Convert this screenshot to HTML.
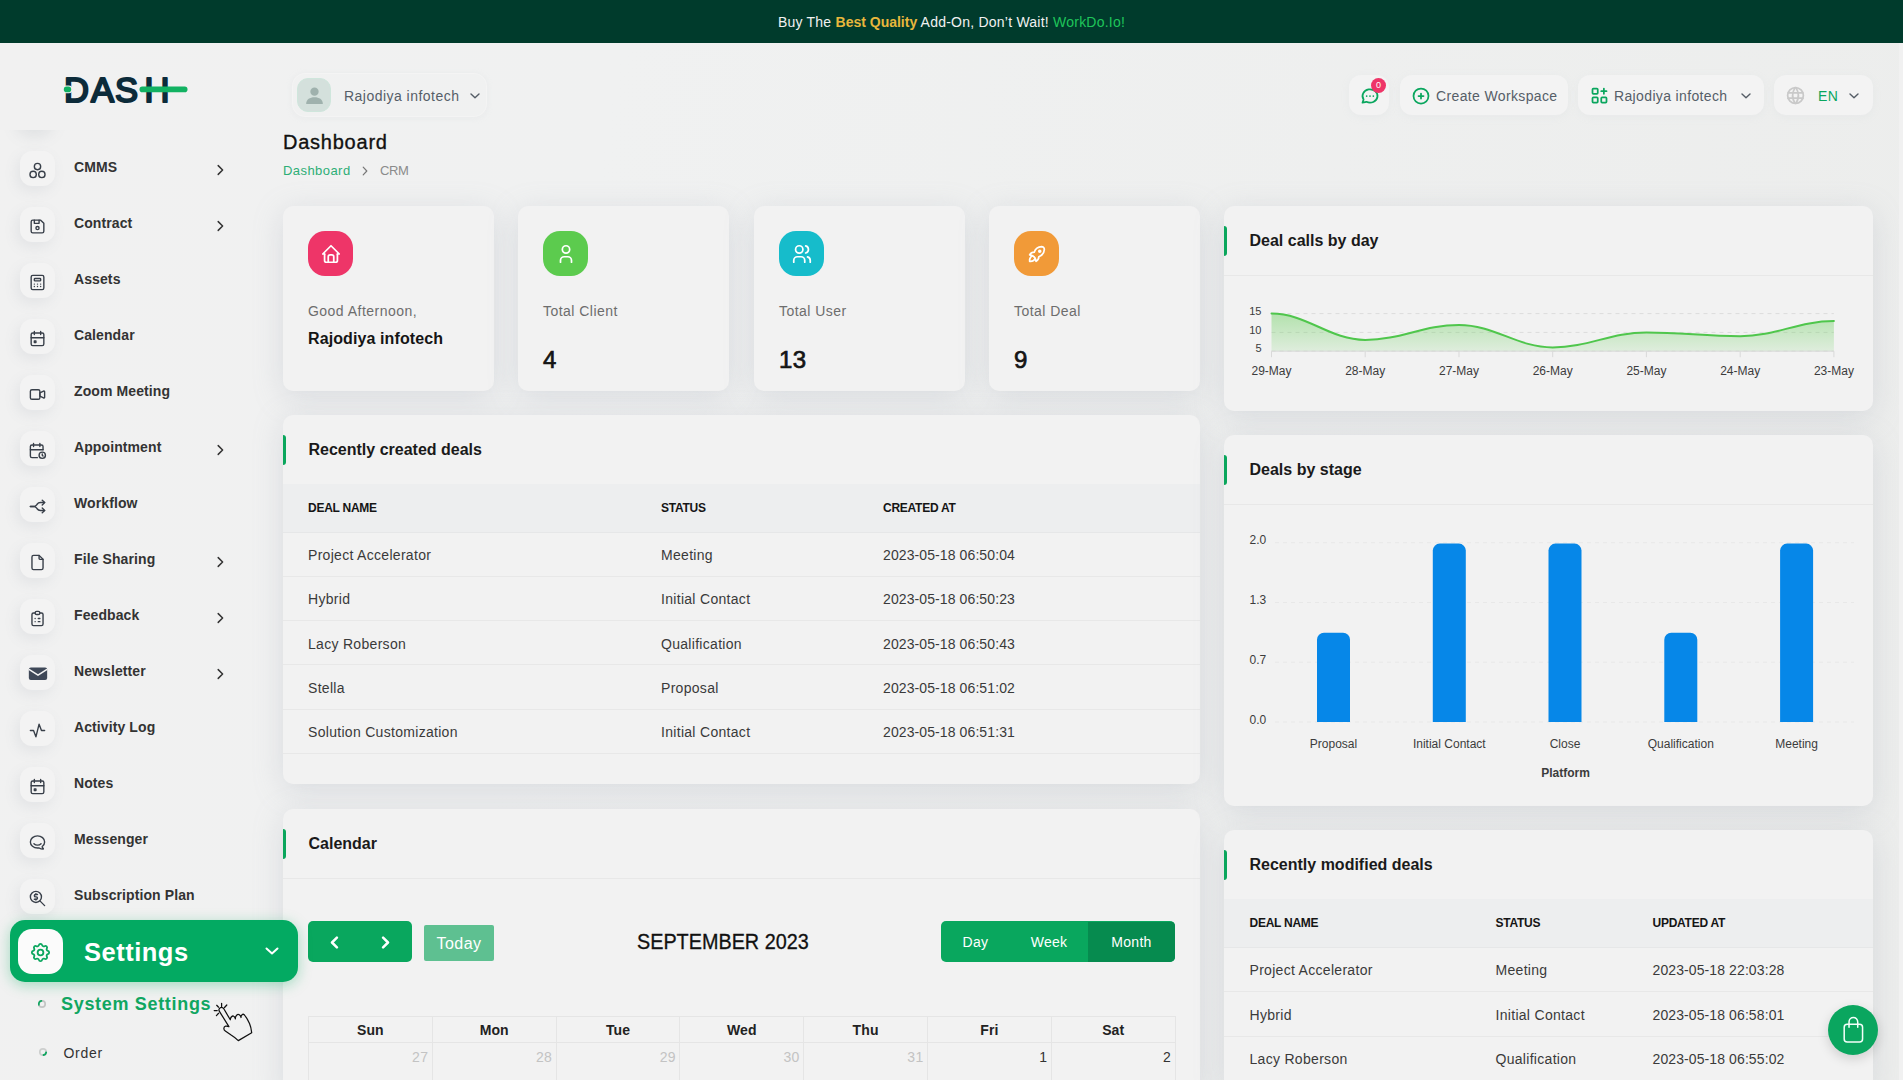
<!DOCTYPE html>
<html lang="en">
<head>
<meta charset="utf-8">
<title>Dashboard</title>
<style>
*{box-sizing:border-box;margin:0;padding:0}
html,body{width:1903px;height:1080px;overflow:hidden}
body{font-family:"Liberation Sans",sans-serif;font-size:14px;color:#333;background:linear-gradient(100deg,#f1f1f1 0,#f0f1f1 30%,#ecedec 100%);position:relative;letter-spacing:.3px}
svg{display:block}
/* banner */
#banner{position:absolute;left:0;top:0;width:1903px;height:42.500px;background:#003b2c;color:#f1f1f1;text-align:center;line-height:44px;font-size:14px;letter-spacing:.23px;white-space:nowrap}
#banner .y{color:#e8b73c;font-weight:700;letter-spacing:0}
#banner .g{color:#1fc55a}
#side,#main{position:absolute;left:0;top:0;width:0;height:0}
#side{z-index:5}
/* sidebar */
#logo{position:absolute;left:63px;top:75px}
.nav{position:absolute;left:0;width:280px;height:36px}
.nav .ic{position:absolute;left:20px;top:0;width:35px;height:35px;border-radius:12px;background:#f3f3f3;box-shadow:-3px 5px 14px rgba(110,120,135,.10)}
.nav .ic svg{position:absolute;left:8.200px;top:9.500px;width:19px;height:19px;stroke:#383f49;fill:none;stroke-width:1.75;stroke-linecap:round;stroke-linejoin:round}
.nav .ic svg.mail{left:6.500px;top:7.700px;width:22px;height:22px}
.nav .tx{position:absolute;left:74px;top:8px;font-weight:700;font-size:14px;letter-spacing:.1px;color:#333;line-height:17px;white-space:nowrap}
.nav .ch{position:absolute;left:215.500px;top:13px;width:9px;height:12px;stroke:#333;fill:none;stroke-width:1.500;stroke-linecap:round;stroke-linejoin:round}
.ghost{position:absolute;left:20px;top:-35px;width:35px;height:35px;border-radius:12px;box-shadow:-3px 5px 16px rgba(110,120,135,.15)}
#setbtn{position:absolute;left:10px;top:920px;width:287.500px;height:62px;border-radius:15px;background:#03aa62;box-shadow:0 3px 14px rgba(12,175,96,.35)}
#setbtn .wic{position:absolute;left:8px;top:9px;width:45px;height:45px;border-radius:14px;background:#fbfbfb}
#setbtn .wic svg{position:absolute;left:10.500px;top:11.500px;width:23px;height:23px;stroke:#0aa65e;fill:none;stroke-width:1.900;stroke-linecap:round;stroke-linejoin:round}
#setbtn .st{position:absolute;left:74px;top:16.500px;font-size:25.500px;line-height:30px;font-weight:700;color:#fff;letter-spacing:.5px}
#setbtn .dn{position:absolute;left:255px;top:27px;width:14px;height:8px;stroke:#fff;fill:none;stroke-width:2;stroke-linecap:round;stroke-linejoin:round}
.sub{position:absolute;white-space:nowrap}
.sub svg{position:absolute;width:10px;height:10px;fill:none;stroke-width:1.700;stroke-linecap:round}
.s1 svg{left:-24.100px;top:6.700px}
.s2 svg{left:-25.800px;top:2px}
.s1{left:61px;top:992px}
.s1 span{font-size:18px;line-height:24px;font-weight:700;color:#10a661;letter-spacing:.68px}
.s2{left:63.500px;top:1045px}
.s2 span{font-size:14px;line-height:17px;color:#333;letter-spacing:.7px}
#hand{position:absolute;left:200px;top:990px;stroke:#111;fill:none;stroke-width:1.250;stroke-linecap:round;stroke-linejoin:round}
/* header */
#userpill{position:absolute;left:292px;top:73px;width:195px;height:44px;border-radius:13px;border:1px solid #f4f4f4;box-shadow:0 1px 6px rgba(200,204,210,.18)}
#userpill .av{position:absolute;left:4px;top:4px;width:34px;height:34px;border-radius:11px;background:#d4e0dc;border:1px solid #cfe6dc}
#userpill .av svg{position:absolute;left:2.500px;top:3px;width:27px;height:27px;fill:#9fb1ad;stroke:none}
#userpill .nm{position:absolute;left:51px;top:14px;line-height:17px;font-size:14px;color:#565e68;letter-spacing:.47px;white-space:nowrap}
.dn{position:absolute;top:19px;width:10px;height:6px;stroke:#555d66;fill:none;stroke-width:1.400;stroke-linecap:round;stroke-linejoin:round}
#userpill .dn{left:177px;top:19px}
.pill{position:absolute;top:75px;height:40px;border-radius:12px;background:#f3f3f3;box-shadow:0 2px 8px rgba(190,195,202,.10)}
.pill .gi{position:absolute;stroke:#0aa65e;fill:none;stroke-width:2;stroke-linecap:round;stroke-linejoin:round}
.pill .gi.gry{stroke:#c9c9c9}
.pill .pt{position:absolute;top:13px;line-height:17px;font-size:14px;color:#565e68;letter-spacing:.36px;white-space:nowrap}
.pill .pt.grn{color:#0aa65e}
.pill .dn{top:18px}
.bdg{position:absolute;left:22px;top:3px;width:15px;height:15px;border-radius:50%;background:#ee3568;color:#fff;font-size:9px;line-height:15px;text-align:center;letter-spacing:0}
#ptitle{position:absolute;left:283px;top:129px;font-size:20px;line-height:26px;font-weight:400;color:#111;letter-spacing:.76px;-webkit-text-stroke:.35px #111;white-space:nowrap}
#crumb{position:absolute;left:283px;top:162px;font-size:13px;line-height:17px;white-space:nowrap;letter-spacing:.25px}
#crumb .c1{position:absolute;left:0;color:#2dae76;letter-spacing:.44px}
#crumb .c2{position:absolute;left:97px;color:#8b8b8b;letter-spacing:-.4px}
#crumb svg{position:absolute;left:79px;top:4px;width:6px;height:10px;stroke:#777;fill:none;stroke-width:1.200;stroke-linecap:round;stroke-linejoin:round}
/* cards */
.card{position:absolute;background:#f2f2f2;border-radius:10px;box-shadow:0 6px 30px rgba(150,160,175,.26);overflow:hidden}
.card .hd{position:absolute;left:0;top:0;right:0;height:69.500px;border-bottom:1px solid #e8e8e8}
.card .hd .bar{position:absolute;left:0;top:20px;width:3px;height:30px;background:#0aa65c;border-radius:0 3px 3px 0}
.card .hd h5{position:absolute;left:25.500px;top:24.500px;font-size:16px;line-height:20px;font-weight:700;letter-spacing:0;color:#1a1a1a;white-space:nowrap}
.stat{top:206px;width:211px;height:184.500px}
.stat .sic{position:absolute;left:25px;top:25px;width:45px;height:45px;border-radius:17px}
.stat .sic svg{position:absolute;left:11.500px;top:11.500px;width:22px;height:22px;stroke:#fff;fill:none;stroke-width:1.900;stroke-linecap:round;stroke-linejoin:round}
.stat .l1{position:absolute;left:25px;top:97px;line-height:17px;font-size:14px;color:#6d6d6d;letter-spacing:.47px;white-space:nowrap}
.stat .nm{position:absolute;left:25px;top:123px;line-height:20px;font-size:16px;font-weight:700;color:#151515;letter-spacing:.1px;white-space:nowrap}
.stat .num{position:absolute;left:25px;top:139.500px;line-height:28px;font-size:24px;font-weight:400;color:#151515;letter-spacing:.3px;-webkit-text-stroke:.7px #151515}
/* tables */
.thead{position:absolute;left:0;right:0;background:#edeeef;border-bottom:1px solid #e6e7e8}
.thead span{position:absolute;top:50%;margin-top:-6.500px;line-height:15px;font-size:12px;font-weight:700;text-transform:uppercase;color:#151515;letter-spacing:-.25px;white-space:nowrap}
.tr{position:absolute;left:0;right:0;border-bottom:1px solid #e8e8e8}
.tr span{position:absolute;top:50%;margin-top:-7px;line-height:17px;font-size:14px;color:#3a3a3a;letter-spacing:.3px;white-space:nowrap}
.tr span:nth-child(3){letter-spacing:.1px}
/* charts */
.chart{position:absolute;left:0;top:0}
.chart text{font-family:"Liberation Sans",sans-serif;letter-spacing:0;fill:#3c3c3c}
.ax11{font-size:11px;dominant-baseline:middle}
.ax12{font-size:12px}
.ay12{font-size:12px;dominant-baseline:middle;fill:#3c3c3c}
.ax12b{font-size:12px;font-weight:700}
/* calendar */
.fcg{position:absolute;height:41px;border-radius:5px;background:#09a75e;overflow:hidden}
.fcg svg{position:absolute;top:14.500px;width:9px;height:13px;stroke:#fff;fill:none;stroke-width:2.300;stroke-linecap:round;stroke-linejoin:round}
.fcg span{position:absolute;top:1px;height:41px;line-height:41px;text-align:center;color:#fff;font-size:14px;letter-spacing:.3px}
.fcg span.act{background:#068b4f}
.today{position:absolute;left:141px;top:116px;width:70px;height:36px;background:#5ec091;color:#fff;font-size:16px;line-height:38px;text-align:center;border-radius:2px;letter-spacing:.45px}
.fct{position:absolute;left:354px;top:119px;font-size:21.500px;line-height:28px;color:#111;letter-spacing:0;transform:scaleX(.921);transform-origin:0 50%;-webkit-text-stroke:.3px #111;white-space:nowrap}
.grid{position:absolute;left:25px;top:206.500px;width:867.500px;height:100px;border-top:1px solid #e5e5e5}
.col{position:absolute;top:0;height:100px;border-left:1px solid #e5e5e5;border-right:1px solid #e5e5e5}
.col .dh{height:26px;line-height:26px;text-align:center;font-weight:700;font-size:14px;color:#222;letter-spacing:.1px;border-bottom:1px solid #e5e5e5}
.col .dn{position:static;width:auto;height:auto;text-align:right;padding-right:3.500px;line-height:29px;font-size:14px;color:#333;letter-spacing:.3px;stroke:none}
.col .dn.om{color:#c3c3c3}
/* fab */
#fab{position:absolute;left:1828px;top:1005px;width:50px;height:50px;border-radius:50%;background:#0aa65f;box-shadow:0 4px 12px rgba(0,0,0,.15)}
#fab svg{position:absolute;left:10.700px;top:10.300px;width:29px;height:29px;stroke:#f4fffa;fill:none;stroke-width:1.250;stroke-linecap:round;stroke-linejoin:round}
#sbar{position:absolute;left:1899px;top:42.500px;width:4px;height:1038px;background:#f1f1f1}

</style>
</head>
<body>
<div id="banner">Buy The <span class="y">Best Quality</span> Add-On, Don’t Wait! <span class="g">WorkDo.Io!</span></div>
<div id="side">
<svg id="logo" viewBox="0 0 126 30" width="126" height="30" role="img" aria-label="DASH">
<text x="1 28 52 81.5" y="27.2" font-family="Liberation Sans, sans-serif" font-weight="400" font-size="34.5" fill="#0c2b3a" stroke="#0c2b3a" stroke-width="2.1" stroke-linejoin="round" stroke-linecap="round">DASH</text>
<rect x="76.5" y="11.6" width="48" height="5.6" rx="2.8" fill="#12b262"/><rect x="-0.5" y="10.6" width="10" height="7.6" rx="3.8" fill="#f1f1f1"/><rect x="0.8" y="11.6" width="7.4" height="5.6" rx="2.8" fill="#12b262"/>
</svg>
<div style="position:absolute;left:0;top:130px;width:90px;height:30px;overflow:hidden"><span class="ic ghost"></span></div>
<div class="nav" style="top:151px"><span class="ic"><svg class="" style="" viewBox="0 0 24 24"><circle cx="12" cy="7" r="4"/><circle cx="6.5" cy="17" r="4"/><circle cx="17.5" cy="17" r="4"/></svg></span><span class="tx">CMMS</span><svg class="ch" viewBox="0 0 9 12"><path d="M2.2 1.6l4.4 4.4l-4.4 4.4"/></svg></div>
<div class="nav" style="top:207px"><span class="ic"><svg class="" style="" viewBox="0 0 24 24"><path d="M6 4h10l4 4v10a2 2 0 0 1 -2 2h-12a2 2 0 0 1 -2 -2v-12a2 2 0 0 1 2 -2"/><circle cx="12" cy="14" r="2"/><path d="M14 4v4h-6v-4"/></svg></span><span class="tx">Contract</span><svg class="ch" viewBox="0 0 9 12"><path d="M2.2 1.6l4.4 4.4l-4.4 4.4"/></svg></div>
<div class="nav" style="top:263px"><span class="ic"><svg class="" style="" viewBox="0 0 24 24"><rect x="4" y="3" width="16" height="18" rx="2"/><rect x="8" y="7" width="8" height="3" rx="1"/><path d="M8 14v.01M12 14v.01M16 14v.01M8 17v.01M12 17v.01M16 17v.01"/></svg></span><span class="tx">Assets</span></div>
<div class="nav" style="top:319px"><span class="ic"><svg class="" style="" viewBox="0 0 24 24"><rect x="4" y="5" width="16" height="16" rx="2"/><path d="M16 3v4M8 3v4M4 11h16"/><rect x="8" y="15" width="2" height="2"/></svg></span><span class="tx">Calendar</span></div>
<div class="nav" style="top:375px"><span class="ic"><svg class="" style="" viewBox="0 0 24 24"><path d="M15 10l4.553 -2.276a1 1 0 0 1 1.447 .894v6.764a1 1 0 0 1 -1.447 .894l-4.553 -2.276v-4z"/><rect x="3" y="6" width="12" height="12" rx="2"/></svg></span><span class="tx">Zoom Meeting</span></div>
<div class="nav" style="top:431px"><span class="ic"><svg class="" style="" viewBox="0 0 24 24"><path d="M11.795 21h-6.795a2 2 0 0 1 -2 -2v-12a2 2 0 0 1 2 -2h12a2 2 0 0 1 2 2v4"/><circle cx="18" cy="18" r="4"/><path d="M15 3v4M7 3v4M3 11h16M18 16.496v1.504l1 1"/></svg></span><span class="tx">Appointment</span><svg class="ch" viewBox="0 0 9 12"><path d="M2.2 1.6l4.4 4.4l-4.4 4.4"/></svg></div>
<div class="nav" style="top:487px"><span class="ic"><svg class="" style="" viewBox="0 0 24 24"><path d="M21 17h-5.397a5 5 0 0 1 -4.096 -2.133l-.514 -.734a5 5 0 0 0 -4.096 -2.133h-3.897"/><path d="M21 7h-5.395a5 5 0 0 0 -4.098 2.135l-.51 .73a5 5 0 0 1 -4.097 2.135h-3.9"/><path d="M18 10l3 -3l-3 -3M18 20l3 -3l-3 -3"/></svg></span><span class="tx">Workflow</span></div>
<div class="nav" style="top:543px"><span class="ic"><svg class="" style="" viewBox="0 0 24 24"><path d="M14 3v4a1 1 0 0 0 1 1h4"/><path d="M17 21h-10a2 2 0 0 1 -2 -2v-14a2 2 0 0 1 2 -2h7l5 5v11a2 2 0 0 1 -2 2z"/></svg></span><span class="tx">File Sharing</span><svg class="ch" viewBox="0 0 9 12"><path d="M2.2 1.6l4.4 4.4l-4.4 4.4"/></svg></div>
<div class="nav" style="top:599px"><span class="ic"><svg class="" style="" viewBox="0 0 24 24"><path d="M9 5h-2a2 2 0 0 0 -2 2v12a2 2 0 0 0 2 2h10a2 2 0 0 0 2 -2v-12a2 2 0 0 0 -2 -2h-2"/><rect x="9" y="3" width="6" height="4" rx="2"/><path d="M9 12h.01M13 12h2M9 16h.01M13 16h2"/></svg></span><span class="tx">Feedback</span><svg class="ch" viewBox="0 0 9 12"><path d="M2.2 1.6l4.4 4.4l-4.4 4.4"/></svg></div>
<div class="nav" style="top:655px"><span class="ic"><svg viewBox="0 0 24 24" class="mail"><rect x="2" y="4.800" width="20" height="13.800" rx="2.200" fill="#3f4858" stroke="none"/><path d="M2.600 7.200l9.400 6.100l9.400 -6.100" stroke="#f3f3f3" stroke-width="1.7" fill="none"/></svg></span><span class="tx">Newsletter</span><svg class="ch" viewBox="0 0 9 12"><path d="M2.2 1.6l4.4 4.4l-4.4 4.4"/></svg></div>
<div class="nav" style="top:711px"><span class="ic"><svg class="" style="" viewBox="0 0 24 24"><path d="M3 12h4l3 8l4 -16l3 8h4"/></svg></span><span class="tx">Activity Log</span></div>
<div class="nav" style="top:767px"><span class="ic"><svg class="" style="" viewBox="0 0 24 24"><rect x="4" y="5" width="16" height="16" rx="2"/><path d="M16 3v4M8 3v4M4 11h16"/><rect x="8" y="15" width="2" height="2"/></svg></span><span class="tx">Notes</span></div>
<div class="nav" style="top:823px"><span class="ic"><svg class="" style="" viewBox="0 0 24 24"><path d="M17.802 17.292s.077 -.055 .2 -.149c1.843 -1.425 3 -3.49 3 -5.789c0 -4.286 -4.03 -7.764 -9 -7.764c-4.97 0 -9 3.478 -9 7.764c0 4.288 4.03 7.646 9 7.646c.424 0 1.12 -.028 2.088 -.084c1.262 .82 3.104 1.493 4.716 1.493c.499 0 .734 -.41 .414 -.828c-.486 -.596 -1.156 -1.551 -1.416 -2.29z"/><path d="M7.5 13.5c2.5 2.5 6.5 2.5 9 0"/></svg></span><span class="tx">Messenger</span></div>
<div class="nav" style="top:879px"><span class="ic"><svg class="" style="" viewBox="0 0 24 24"><circle cx="10" cy="10" r="7"/><path d="M21 21l-6 -6"/><path d="M12 7h-2.5a1.5 1.5 0 0 0 0 3h1a1.5 1.5 0 0 1 0 3h-2.5"/><path d="M10 13v1m0 -8v1"/></svg></span><span class="tx">Subscription Plan</span></div>
<div id="setbtn"><span class="wic"><svg class="" style="" viewBox="0 0 24 24"><path d="M10.325 4.317c.426 -1.756 2.924 -1.756 3.35 0a1.724 1.724 0 0 0 2.573 1.066c1.543 -.94 3.31 .826 2.37 2.37a1.724 1.724 0 0 0 1.065 2.572c1.756 .426 1.756 2.924 0 3.35a1.724 1.724 0 0 0 -1.066 2.573c.94 1.543 -.826 3.31 -2.37 2.37a1.724 1.724 0 0 0 -2.572 1.065c-.426 1.756 -2.924 1.756 -3.35 0a1.724 1.724 0 0 0 -2.573 -1.066c-1.543 .94 -3.31 -.826 -2.37 -2.37a1.724 1.724 0 0 0 -1.065 -2.572c-1.756 -.426 -1.756 -2.924 0 -3.35a1.724 1.724 0 0 0 1.066 -2.573c-.94 -1.543 .826 -3.31 2.37 -2.37c1 .608 2.296 .07 2.572 -1.065z"/><circle cx="12" cy="12" r="3"/></svg></span><span class="st">Settings</span><svg class="dn" viewBox="0 0 14 8"><path d="M1.5 1.5l5.5 5l5.5 -5"/></svg></div>
<div class="sub s1"><svg viewBox="0 0 10 10"><circle cx="5" cy="5" r="3.200" stroke="#c3c5c4"/><path d="M1.900 5.800A3.200 3.200 0 0 1 4.400 1.900" stroke="#10a661"/></svg><span>System Settings</span></div>
<div class="sub s2"><svg viewBox="0 0 10 10"><circle cx="5" cy="5" r="3.200" stroke="#cdcfce"/><path d="M8.100 5.600A3.200 3.200 0 0 1 5.600 8.100" stroke="#10a661" stroke-width="2"/></svg><span>Order</span></div>
<svg id="hand" viewBox="0 0 70 60" width="70" height="60"><path d="M28.900 36.700L19.400 21.300a2.550 2.550 0 0 1 4.400 -2.600L30.300 29.800C30.300 27.200 32.400 25.300 33.800 26.300C35 27.100 35.300 28.300 35.400 28.800C35.200 25.600 37.600 23.700 39.300 24.800C40.500 25.600 40.900 26.700 41 27.500C40.800 24.800 42.900 23.500 44.300 24.800C46.500 27.300 48.300 30.800 49.500 33.500C50.800 36.400 51.400 39.800 51.700 42.800L38.300 50.600C36.200 48.500 33.800 46.700 31.100 45L25.300 41.100C23.300 39.700 23.400 36.600 25.600 36.100C26.800 35.900 28 36.200 28.900 36.700z"/><path d="M21.600 13.300v3.300M16.700 15.300l1.900 1.900M26.800 15l-2.300 2.500M14.200 20.600h3M16.400 25.600l2.200 -2.300"/></svg>
</div>
<div id="main">
<div id="userpill"><span class="av"><svg viewBox="0 0 24 24"><circle cx="12" cy="8.6" r="3.7"/><path d="M4.6 19.600c0 -4.200 3.300 -6 7.400 -6s7.400 1.800 7.400 6z"/></svg></span><span class="nm">Rajodiya infotech</span><svg class="dn" viewBox="0 0 10 6"><path d="M1 1l4 3.800l4 -3.800"/></svg></div>
<div class="pill" style="left:1349px;width:40px"><svg class="gi" style="left:10.5px;top:10.8px;width:20px;height:20px;stroke-width:2.1" viewBox="0 0 24 24"><path d="M3 20l1.3 -3.9a9 8 0 1 1 3.4 2.9l-4.700 1"/><path d="M12 12v.01M8 12v.01M16 12v.01"/></svg><span class="bdg">0</span></div>
<div class="pill" style="left:1400px;width:168px"><svg class="gi" style="left:11.3px;top:10.9px;width:20px;height:20px;stroke-width:2.1" viewBox="0 0 24 24"><circle cx="12" cy="12" r="9"/><path d="M9 12h6M12 9v6"/></svg><span class="pt" style="left:36px">Create Workspace</span></div>
<div class="pill" style="left:1578px;width:186px"><svg class="gi" style="left:11px;top:10px;width:21px;height:21px" viewBox="0 0 24 24"><rect x="4" y="4" width="6" height="6" rx="1"/><rect x="4" y="14" width="6" height="6" rx="1"/><rect x="14" y="14" width="6" height="6" rx="1"/><path d="M14 7h6M17 4v6"/></svg><span class="pt" style="left:36px">Rajodiya infotech</span><svg class="dn" style="left:163px" viewBox="0 0 10 6"><path d="M1 1l4 3.800l4 -3.800"/></svg></div>
<div class="pill" style="left:1774px;width:99px"><svg class="gi gry" style="left:11px;top:10px;width:21px;height:21px" viewBox="0 0 24 24"><circle cx="12" cy="12" r="9"/><path d="M3.6 9h16.8M3.6 15h16.8"/><path d="M11.5 3a17 17 0 0 0 0 18"/><path d="M12.5 3a17 17 0 0 1 0 18"/></svg><span class="pt grn" style="left:44px">EN</span><svg class="dn" style="left:75px" viewBox="0 0 10 6"><path d="M1 1l4 3.800l4 -3.800"/></svg></div>
<h4 id="ptitle">Dashboard</h4>
<div id="crumb"><span class="c1">Dashboard</span><svg viewBox="0 0 6 10"><path d="M1.200 1.200l3.600 3.800l-3.600 3.800"/></svg><span class="c2">CRM</span></div>
<div class="card stat" style="left:283px"><span class="sic" style="background:#ee3568"><svg class="" style="" viewBox="0 0 24 24"><path d="M5 12h-2l9 -9l9 9h-2"/><path d="M5 12v7a2 2 0 0 0 2 2h10a2 2 0 0 0 2 -2v-7"/><path d="M9 21v-6a2 2 0 0 1 2 -2h2a2 2 0 0 1 2 2v6"/></svg></span><p class="l1">Good Afternoon,</p><p class="nm">Rajodiya infotech</p></div>
<div class="card stat" style="left:518px"><span class="sic" style="background:#5ccb4e"><svg class="" style="" viewBox="0 0 24 24"><circle cx="12" cy="7" r="4"/><path d="M6 21v-2a4 4 0 0 1 4 -4h4a4 4 0 0 1 4 4v2"/></svg></span><p class="l1">Total Client</p><p class="num">4</p></div>
<div class="card stat" style="left:754px"><span class="sic" style="background:#16bccb"><svg class="" style="" viewBox="0 0 24 24"><circle cx="9" cy="7" r="4"/><path d="M3 21v-2a4 4 0 0 1 4 -4h4a4 4 0 0 1 4 4v2"/><path d="M16 3.13a4 4 0 0 1 0 7.75"/><path d="M21 21v-2a4 4 0 0 0 -3 -3.85"/></svg></span><p class="l1">Total User</p><p class="num">13</p></div>
<div class="card stat" style="left:989px"><span class="sic" style="background:#f19a38"><svg class="" style="" viewBox="0 0 24 24"><path d="M4 13a8 8 0 0 1 7 7a6 6 0 0 0 3 -5a9 9 0 0 0 6 -8a3 3 0 0 0 -3 -3a9 9 0 0 0 -8 6a6 6 0 0 0 -5 3"/><path d="M7 14a6 6 0 0 0 -3 6a6 6 0 0 0 6 -3"/><circle cx="15" cy="9" r="1"/></svg></span><p class="l1">Total Deal</p><p class="num">9</p></div>
<div class="card" style="left:283px;top:415px;width:917px;height:369px"><div class="hd"><i class="bar"></i><h5>Recently created deals</h5></div><div class="thead" style="top:69px;height:48.5px"><span style="left:25px">DEAL NAME</span><span style="left:378px">STATUS</span><span style="left:600px">CREATED AT</span></div><div class="tr" style="top:117.5px;height:44.3px"><span style="left:25px">Project Accelerator</span><span style="left:378px">Meeting</span><span style="left:600px">2023-05-18 06:50:04</span></div><div class="tr" style="top:161.8px;height:44.3px"><span style="left:25px">Hybrid</span><span style="left:378px">Initial Contact</span><span style="left:600px">2023-05-18 06:50:23</span></div><div class="tr" style="top:206.1px;height:44.3px"><span style="left:25px">Lacy Roberson</span><span style="left:378px">Qualification</span><span style="left:600px">2023-05-18 06:50:43</span></div><div class="tr" style="top:250.4px;height:44.3px"><span style="left:25px">Stella</span><span style="left:378px">Proposal</span><span style="left:600px">2023-05-18 06:51:02</span></div><div class="tr" style="top:294.7px;height:44.3px"><span style="left:25px">Solution Customization</span><span style="left:378px">Initial Contact</span><span style="left:600px">2023-05-18 06:51:31</span></div></div>
<div class="card" style="left:283px;top:809px;width:917px;height:290px"><div class="hd"><i class="bar"></i><h5>Calendar</h5></div><div class="fcg" style="left:25px;top:112px;width:104px"><svg viewBox="0 0 8 12" style="left:22px"><path d="M6.200 1.500l-4.500 4.500l4.500 4.500"/></svg><svg viewBox="0 0 8 12" style="left:73px"><path d="M1.800 1.500l4.500 4.500l-4.500 4.500"/></svg></div><div class="today">Today</div><div class="fct">SEPTEMBER 2023</div><div class="fcg" style="left:658px;top:112px;width:234px"><span style="left:0;width:69px">Day</span><span style="left:69px;width:78px">Week</span><span class="act" style="left:147px;width:87px">Month</span></div><div class="grid"><div class="col" style="left:0.0px;width:124.8px"><div class="dh">Sun</div><div class="dn om">27</div></div><div class="col" style="left:123.8px;width:124.8px"><div class="dh">Mon</div><div class="dn om">28</div></div><div class="col" style="left:247.6px;width:124.8px"><div class="dh">Tue</div><div class="dn om">29</div></div><div class="col" style="left:371.4px;width:124.8px"><div class="dh">Wed</div><div class="dn om">30</div></div><div class="col" style="left:495.2px;width:124.8px"><div class="dh">Thu</div><div class="dn om">31</div></div><div class="col" style="left:619.0px;width:124.8px"><div class="dh">Fri</div><div class="dn">1</div></div><div class="col" style="left:742.8px;width:124.8px"><div class="dh">Sat</div><div class="dn">2</div></div></div></div>
<div class="card" style="left:1224px;top:206px;width:649px;height:204.5px"><div class="hd"><i class="bar"></i><h5>Deal calls by day</h5></div><svg class="chart" width="649" height="204" viewBox="0 0 649 204"><defs><linearGradient id="lg" x1="0" y1="0" x2="0" y2="1"><stop offset="0" stop-color="#5ccb4e" stop-opacity=".42"/><stop offset="1" stop-color="#5ccb4e" stop-opacity=".13"/></linearGradient></defs><line x1="47.5" x2="609.9" y1="107.6" y2="107.6" stroke="#dcdcdc" stroke-dasharray="4 4"/><text x="37.5" y="105.8" text-anchor="end" class="ax11">15</text><line x1="47.5" x2="609.9" y1="126.4" y2="126.4" stroke="#dcdcdc" stroke-dasharray="4 4"/><text x="37.5" y="124.6" text-anchor="end" class="ax11">10</text><line x1="47.5" x2="609.9" y1="145.2" y2="145.2" stroke="#dcdcdc" stroke-dasharray="4 4"/><text x="37.5" y="143.4" text-anchor="end" class="ax11">5</text><path d="M47.5 107.6 C83.1 107.6 105.6 133.9 141.2 133.9 C176.8 133.9 199.3 118.9 235.0 118.9 C270.6 118.9 293.1 141.4 328.7 141.4 C364.3 141.4 386.8 126.4 422.4 126.4 C458.0 126.4 480.5 130.2 516.2 130.2 C551.8 130.2 574.3 115.1 609.9 115.1 L609.9 145.2 L47.5 145.2Z" fill="url(#lg)"/><path d="M47.5 107.6 C83.1 107.6 105.6 133.9 141.2 133.9 C176.8 133.9 199.3 118.9 235.0 118.9 C270.6 118.9 293.1 141.4 328.7 141.4 C364.3 141.4 386.8 126.4 422.4 126.4 C458.0 126.4 480.5 130.2 516.2 130.2 C551.8 130.2 574.3 115.1 609.9 115.1" fill="none" stroke="#4fc64c" stroke-width="2" stroke-linecap="round"/><line x1="47.5" x2="609.9" y1="145.2" y2="145.2" stroke="#d9d9d9"/><line x1="47.5" x2="47.5" y1="145.2" y2="151.2" stroke="#d9d9d9"/><text x="47.5" y="169.2" text-anchor="middle" class="ax12">29-May</text><line x1="141.2" x2="141.2" y1="145.2" y2="151.2" stroke="#d9d9d9"/><text x="141.2" y="169.2" text-anchor="middle" class="ax12">28-May</text><line x1="235.0" x2="235.0" y1="145.2" y2="151.2" stroke="#d9d9d9"/><text x="235.0" y="169.2" text-anchor="middle" class="ax12">27-May</text><line x1="328.7" x2="328.7" y1="145.2" y2="151.2" stroke="#d9d9d9"/><text x="328.7" y="169.2" text-anchor="middle" class="ax12">26-May</text><line x1="422.4" x2="422.4" y1="145.2" y2="151.2" stroke="#d9d9d9"/><text x="422.4" y="169.2" text-anchor="middle" class="ax12">25-May</text><line x1="516.2" x2="516.2" y1="145.2" y2="151.2" stroke="#d9d9d9"/><text x="516.2" y="169.2" text-anchor="middle" class="ax12">24-May</text><line x1="609.9" x2="609.9" y1="145.2" y2="151.2" stroke="#d9d9d9"/><text x="609.9" y="169.2" text-anchor="middle" class="ax12">23-May</text></svg></div>
<div class="card" style="left:1224px;top:435px;width:649px;height:370.5px"><div class="hd"><i class="bar"></i><h5>Deals by stage</h5></div><svg class="chart" width="649" height="370" viewBox="0 0 649 370"><line x1="51" x2="630" y1="107.7" y2="107.7" stroke="#e8e8e8" stroke-dasharray="4 4"/><text x="25.5" y="106.2" class="ay12">2.0</text><line x1="51" x2="630" y1="167.5" y2="167.5" stroke="#e8e8e8" stroke-dasharray="4 4"/><text x="25.5" y="166.0" class="ay12">1.3</text><line x1="51" x2="630" y1="227.2" y2="227.2" stroke="#e8e8e8" stroke-dasharray="4 4"/><text x="25.5" y="225.7" class="ay12">0.7</text><line x1="51" x2="630" y1="287.0" y2="287.0" stroke="#e8e8e8" stroke-dasharray="4 4"/><text x="25.5" y="285.5" class="ay12">0.0</text><path d="M93.0 287.0v-82.2a7 7 0 0 1 7 -7h19a7 7 0 0 1 7 7v82.2z" fill="#0687e8"/><text x="109.5" y="312.8" text-anchor="middle" class="ax12">Proposal</text><path d="M208.8 287.0v-171.4a7 7 0 0 1 7 -7h19a7 7 0 0 1 7 7v171.4z" fill="#0687e8"/><text x="225.3" y="312.8" text-anchor="middle" class="ax12">Initial Contact</text><path d="M324.5 287.0v-171.4a7 7 0 0 1 7 -7h19a7 7 0 0 1 7 7v171.4z" fill="#0687e8"/><text x="341.0" y="312.8" text-anchor="middle" class="ax12">Close</text><path d="M440.3 287.0v-82.2a7 7 0 0 1 7 -7h19a7 7 0 0 1 7 7v82.2z" fill="#0687e8"/><text x="456.8" y="312.8" text-anchor="middle" class="ax12">Qualification</text><path d="M556.1 287.0v-171.4a7 7 0 0 1 7 -7h19a7 7 0 0 1 7 7v171.4z" fill="#0687e8"/><text x="572.6" y="312.8" text-anchor="middle" class="ax12">Meeting</text><text x="341.5" y="341.8" text-anchor="middle" class="ax12b">Platform</text></svg></div>
<div class="card" style="left:1224px;top:830px;width:649px;height:260px"><div class="hd"><i class="bar"></i><h5>Recently modified deals</h5></div><div class="thead" style="top:69px;height:48.7px"><span style="left:25.5px">DEAL NAME</span><span style="left:271.5px">STATUS</span><span style="left:428.5px">UPDATED AT</span></div><div class="tr" style="top:117.7px;height:44.5px"><span style="left:25.5px">Project Accelerator</span><span style="left:271.5px">Meeting</span><span style="left:428.5px">2023-05-18 22:03:28</span></div><div class="tr" style="top:162.2px;height:44.5px"><span style="left:25.5px">Hybrid</span><span style="left:271.5px">Initial Contact</span><span style="left:428.5px">2023-05-18 06:58:01</span></div><div class="tr" style="top:206.7px;height:44.5px"><span style="left:25.5px">Lacy Roberson</span><span style="left:271.5px">Qualification</span><span style="left:428.5px">2023-05-18 06:55:02</span></div></div>
<div id="fab"><svg class="" style="" viewBox="0 0 24 24"><rect x="4.300" y="7.600" width="15.200" height="14.800" rx="2.500"/><path d="M8.300 10.200v-4.500a3.600 3.600 0 0 1 7.200 0v4.500"/></svg></div>
<div id="sbar"></div>
</div>
</body>
</html>
